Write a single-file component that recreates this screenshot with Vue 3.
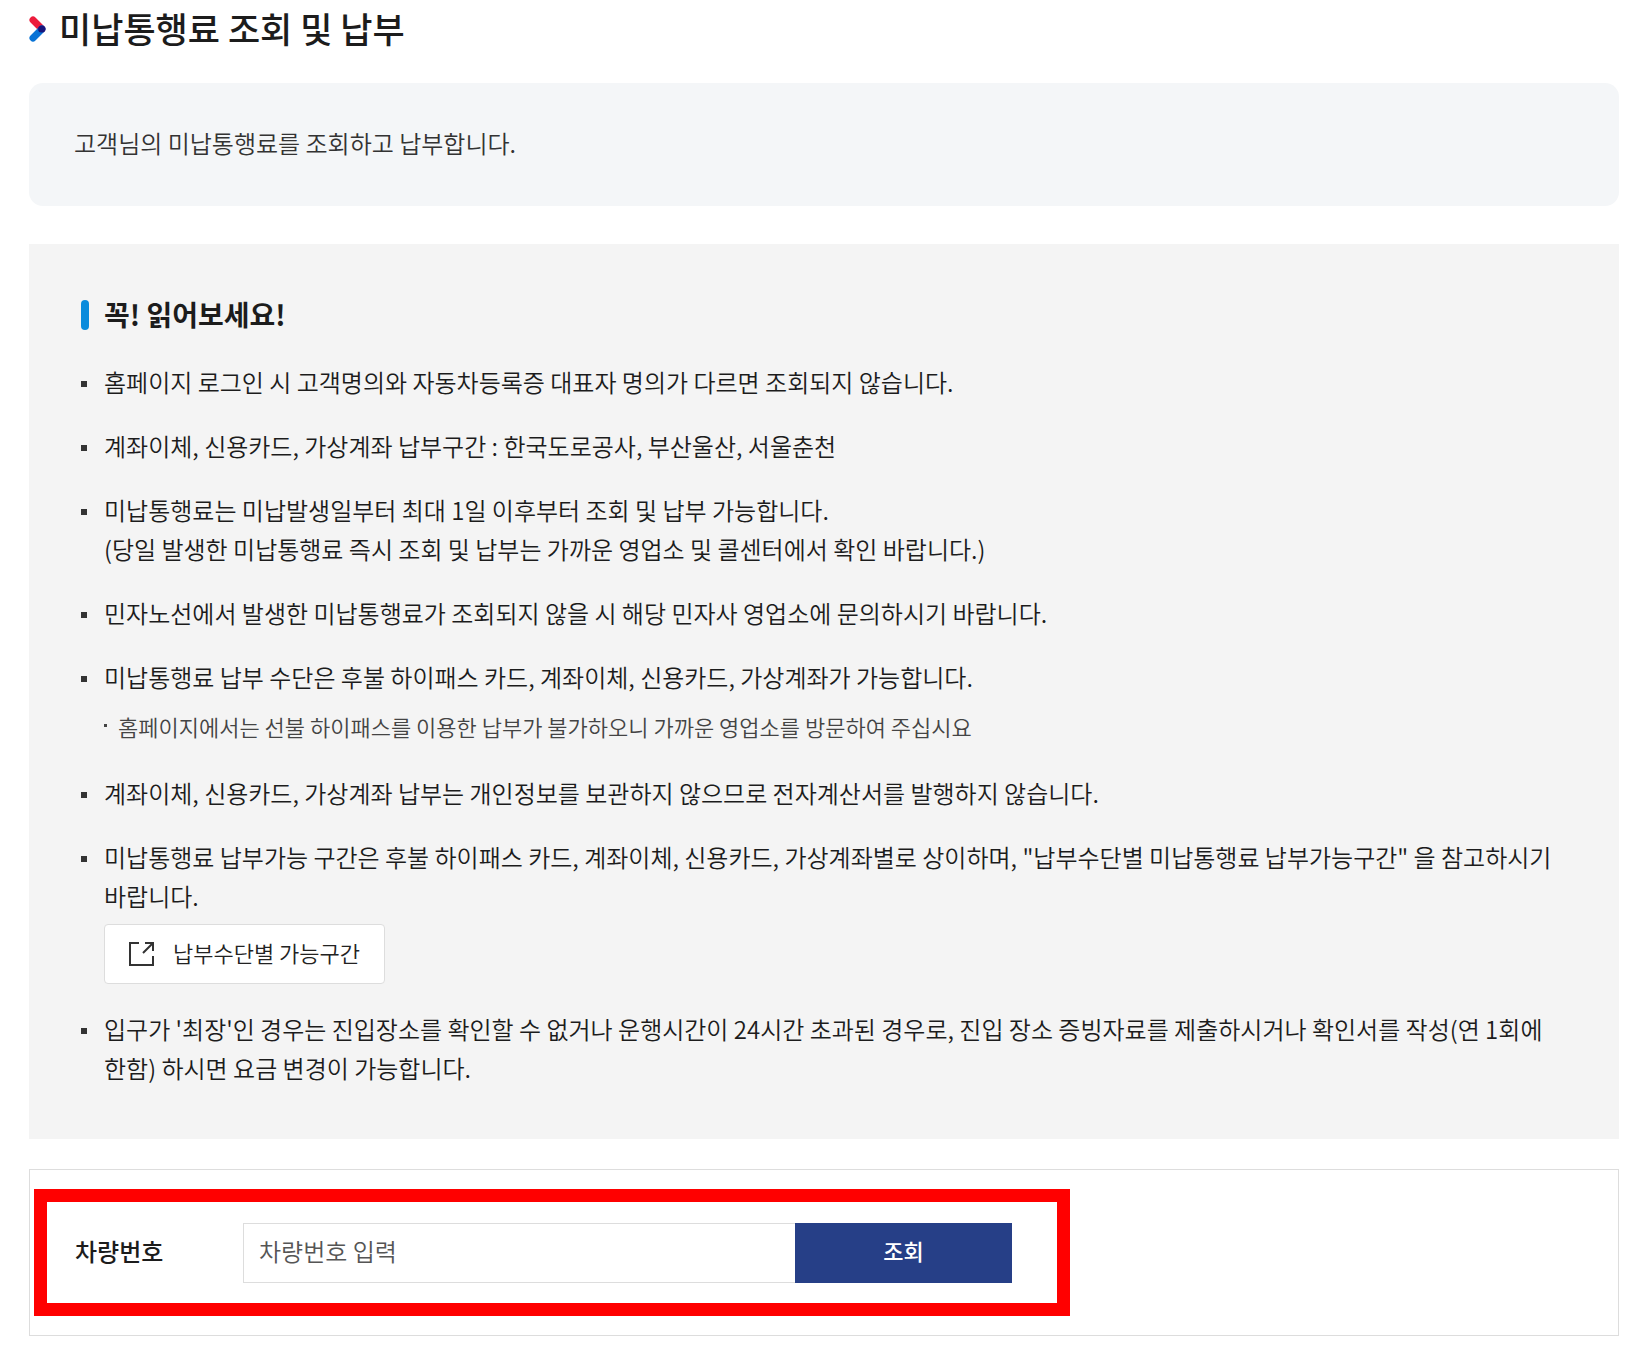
<script setup>
import { ref } from 'vue'

const plate = ref('')

const notices = [
  { lines: ['홈페이지 로그인 시 고객명의와 자동차등록증 대표자 명의가 다르면 조회되지 않습니다.'] },
  { lines: ['계좌이체, 신용카드, 가상계좌 납부구간 : 한국도로공사, 부산울산, 서울춘천'] },
  {
    lines: [
      '미납통행료는 미납발생일부터 최대 1일 이후부터 조회 및 납부 가능합니다.',
      '(당일 발생한 미납통행료 즉시 조회 및 납부는 가까운 영업소 및 콜센터에서 확인 바랍니다.)',
    ],
  },
  { lines: ['민자노선에서 발생한 미납통행료가 조회되지 않을 시 해당 민자사 영업소에 문의하시기 바랍니다.'] },
  {
    lines: ['미납통행료 납부 수단은 후불 하이패스 카드, 계좌이체, 신용카드, 가상계좌가 가능합니다.'],
    sub: '홈페이지에서는 선불 하이패스를 이용한 납부가 불가하오니 가까운 영업소를 방문하여 주십시요',
  },
  { lines: ['계좌이체, 신용카드, 가상계좌 납부는 개인정보를 보관하지 않으므로 전자계산서를 발행하지 않습니다.'] },
  {
    lines: [
      '미납통행료 납부가능 구간은 후불 하이패스 카드, 계좌이체, 신용카드, 가상계좌별로 상이하며, "납부수단별 미납통행료 납부가능구간" 을 참고하시기 바랍니다.',
    ],
    link: '납부수단별 가능구간',
  },
  {
    lines: [
      "입구가 '최장'인 경우는 진입장소를 확인할 수 없거나 운행시간이 24시간 초과된 경우로, 진입 장소 증빙자료를 제출하시거나 확인서를 작성(연 1회에 한함) 하시면 요금 변경이 가능합니다.",
    ],
  },
]
</script>

<template>
  <main class="page">
    <h1 class="title">
      <svg class="chevron" width="18" height="28" viewBox="0 0 18 28" aria-hidden="true">
        <path d="M4 6 13 15" stroke="#ec1c3c" />
        <path d="M4 24 13 15" stroke="#0873d6" />
        <path d="M12.6 15h.2" stroke="#17167c" />
      </svg>
      미납통행료 조회 및 납부
    </h1>

    <p class="intro">고객님의 미납통행료를 조회하고 납부합니다.</p>

    <section class="notice">
      <h2 class="notice-title">꼭! 읽어보세요!</h2>
      <ul class="list">
        <li v-for="(item, i) in notices" :key="i" class="item">
          <p v-for="line in item.lines" :key="line" class="line">{{ line }}</p>
          <ul v-if="item.sub" class="sub">
            <li class="sub-item">{{ item.sub }}</li>
          </ul>
          <a v-if="item.link" class="link" href="#">
            <svg width="26" height="26" viewBox="0 0 26 26" aria-hidden="true">
              <path d="M10 2H1v22h23v-9M14 12 24 2M16 2h8v8" />
            </svg>
            <span class="link-text">{{ item.link }}</span>
          </a>
        </li>
      </ul>
    </section>

    <form class="search" @submit.prevent>
      <div class="frame">
        <label class="label" for="plate">차량번호</label>
        <input id="plate" v-model="plate" class="input" type="text" placeholder="차량번호 입력" />
        <button class="submit" type="submit">조회</button>
      </div>
    </form>
  </main>
</template>

<style>
body {
  margin: 0;
  background: #fff;
}
</style>

<style scoped>
.page {
  padding: 8px 24px 29px 29px;
  font-family: "Noto Sans CJK KR", "Noto Sans", sans-serif;
  font-size: 24px;
  line-height: 39px;
  font-weight: 350;
  color: #1c1c1c;
  word-break: keep-all;
}

h1,
h2,
p,
ul {
  margin: 0;
  padding: 0;
}

ul {
  list-style: none;
}

.title {
  display: flex;
  align-items: center;
  gap: 12px;
  font-size: 35px;
  line-height: 39px;
  font-weight: 500;
}

.chevron {
  flex: none;
  fill: none;
  stroke-width: 7;
  stroke-linecap: round;
  stroke-linejoin: round;
}

.intro {
  margin-top: 36px;
  padding: 40px 45px 44px;
  border-radius: 14px;
  background: #f4f6f8;
  color: #333;
}

.notice {
  margin-top: 38px;
  padding: 50px 50px 52px 52px;
  background: #f4f4f4;
}

.notice-title {
  display: flex;
  align-items: center;
  gap: 15px;
  font-size: 28px;
  line-height: 41px;
  font-weight: 700;
}

.notice-title::before {
  content: "";
  width: 8px;
  height: 30px;
  border-radius: 4px;
  background: #0a8bdc;
}

.list {
  display: flex;
  flex-direction: column;
  gap: 25px;
  margin-top: 27px;
}

.item {
  position: relative;
  padding-left: 23px;
}

.item::before {
  content: "";
  position: absolute;
  top: 19px;
  left: 0;
  width: 6px;
  height: 6px;
  background: #333;
}

.sub {
  padding: 12px 0 4px;
  font-size: 22px;
  line-height: 36px;
  color: #444;
}

.sub-item {
  position: relative;
  padding-left: 14px;
}

.sub-item::before {
  content: "";
  position: absolute;
  top: 16px;
  left: 0;
  width: 3px;
  height: 3px;
  background: #444;
}

.link {
  display: flex;
  align-items: center;
  gap: 18px;
  box-sizing: border-box;
  width: fit-content;
  height: 60px;
  margin-top: 9px;
  padding: 0 24px;
  border: 1px solid #ddd;
  border-radius: 4px;
  background: #fff;
  color: #222;
  font-size: 22px;
  text-decoration: none;
}

.link-text {
  padding-bottom: 4px;
}

.link svg {
  fill: none;
  stroke: #333;
  stroke-width: 2;
}

.search {
  margin-top: 30px;
  padding: 19px 4px;
  border: 1px solid #ddd;
}

.frame {
  display: flex;
  align-items: center;
  box-sizing: border-box;
  max-width: 1036px;
  padding: 21px 45px 20px 28px;
  border: 13px solid #f00;
}

.label {
  flex: none;
  width: 168px;
  padding-bottom: 5px;
  font-weight: 500;
}

.input {
  flex: 1;
  min-width: 0;
  box-sizing: border-box;
  height: 60px;
  padding: 0 15px 5px;
  border: 1px solid #ddd;
  border-right: 0;
  background: #fff;
  color: #222;
  font: inherit;
}

.input::placeholder {
  color: #555;
}

.submit {
  flex: none;
  width: 217px;
  height: 60px;
  padding: 0 0 5px;
  border: 0;
  background: #263f87;
  color: #fff;
  font: inherit;
  font-size: 22px;
  font-weight: 500;
}
</style>
